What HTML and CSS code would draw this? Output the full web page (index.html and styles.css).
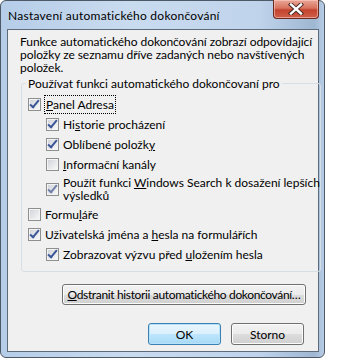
FILE: index.html
```html
<!DOCTYPE html>
<html lang="cs">
<head>
  <meta charset="UTF-8">
  <title>Nastavení automatického dokončování</title>
  <link rel="stylesheet" href="styles.css">
</head>
<body>

  <div class="window">
    <div class="titlebar">
      <span class="title">Nastavení automatického dokončování</span>
      <div class="close-btn">
        <svg width="16" height="12" viewBox="0 0 16 12">
          <path d="M3 1.5 L13 10.5 M13 1.5 L3 10.5" stroke="#3b2220" stroke-width="4.2" stroke-linecap="square"/>
          <path d="M3 1.5 L13 10.5 M13 1.5 L3 10.5" stroke="#ffffff" stroke-width="2.4" stroke-linecap="square"/>
        </svg>
      </div>
    </div>

    <div class="client">
      <p class="intro">
        Funkce automatického dokončování zobrazí odpovídající<br>
        položky ze seznamu dříve zadaných nebo navštívených<br>
        položek.
      </p>

      <fieldset class="group">
        <legend>Používat funkci automatického dokončovaní pro</legend>

        <label class="check">
          <span class="box checked"></span>
          <span class="focus"><u>P</u>anel Adresa</span>
        </label>
        <div class="sub">
          <label class="check">
            <span class="box checked"></span>
            <span>Hi<u>s</u>torie procházení</span>
          </label>
          <label class="check">
            <span class="box checked"></span>
            <span>Oblíbené položk<u>y</u></span>
          </label>
          <label class="check">
            <span class="box"></span>
            <span><u>I</u>nformační kanály</span>
          </label>
          <label class="check tall">
            <span class="box checked dim"></span>
            <span>Použít funkci <u>W</u>indows Search k dosažení lepších<br>výsledků</span>
          </label>
        </div>

        <label class="check">
          <span class="box"></span>
          <span>Formu<u>l</u>áře</span>
        </label>
        <label class="check">
          <span class="box checked"></span>
          <span>Uživatelská jména a <u>h</u>esla na formulářích</span>
        </label>
        <div class="sub">
          <label class="check">
            <span class="box checked"></span>
            <span>Zobrazovat výzvu před <u>u</u>ložením hesla</span>
          </label>
        </div>
      </fieldset>

      <div class="clear-row">
        <button class="btn wide"><u>O</u>dstranit historii automatického dokončování…</button>
      </div>

      <div class="actions">
        <button class="btn default">OK</button>
        <button class="btn">Storno</button>
      </div>
    </div>
  </div>

</body>
</html>
```

FILE: styles.css
```css
body {
  margin: 0;
  background: #fff;
  font-family: Lato, "Liberation Sans", Arial, sans-serif;
  font-size: 12px;
  color: #000;
  white-space: nowrap;
}

.window {
  position: relative;
  width: 325px;
  height: 358px;
  box-sizing: border-box;
  border: 1px solid #4d5966;
  border-radius: 6px;
  padding: 0 5px 5px 6px;
  background: linear-gradient(90deg, #b6cde8 0%, #c9dbef 40%, #bfd3eb 80%, #9fb7d2 97%, #b9cde6 100%);
  display: flex;
  flex-direction: column;
}

.titlebar {
  height: 28px;
  flex: none;
}

.title {
  display: block;
  padding: 7px 0 0 1px;
  line-height: 15px;
  letter-spacing: 0.25px;
  color: #000;
}

.close-btn {
  position: absolute;
  top: -1px;
  right: 5px;
  width: 44px;
  height: 18px;
  border: 1px solid #6a2a20;
  border-top: none;
  border-radius: 0 0 4px 4px;
  background: linear-gradient(#e9a797 0%, #d8735f 45%, #c2432e 55%, #d0604a 100%);
  box-shadow: inset 0 0 0 1px rgba(255,210,200,0.55);
  display: flex;
  justify-content: center;
  align-items: center;
}

.client {
  flex: 1;
  min-height: 0;
  border: 1px solid #5e6b7b;
  background: #f0f0f0;
  padding: 5px 0 0 0;
}

.intro {
  margin: 0 0 0 12px;
  line-height: 13px;
  letter-spacing: -0.05px;
}

.group {
  margin: 2px 11px 0 13px;
  padding: 3px 0 7px 6px;
  border: 1px solid #d5dfe5;
  border-radius: 3px;
}

.group legend {
  margin-left: -2px;
  padding: 0 2px;
  line-height: 15px;
}

.check {
  display: flex;
  align-items: center;
  height: 20px;
}

.check.tall {
  height: 30px;
}

.check.tall span:last-child {
  line-height: 13px;
}

.sub {
  padding-left: 18px;
}

.box {
  position: relative;
  flex: none;
  width: 11px;
  height: 11px;
  margin-right: 4px;
  border: 1px solid #8e8f8f;
  background: linear-gradient(135deg, #cdd1d8 0%, #e9eaec 60%, #fafafa 100%);
  box-shadow: inset 0 0 0 1px #f4f4f4;
}

.box.checked::after {
  content: "";
  position: absolute;
  left: 3px;
  top: -1px;
  width: 3px;
  height: 8px;
  border-right: 2px solid #3a5597;
  border-bottom: 2px solid #3a5597;
  transform: rotate(40deg);
}

.box.dim::after {
  border-color: #6f7fa8;
}

.focus {
  outline: 1px dotted #000;
  outline-offset: 0;
  padding: 0 1px;
  line-height: 17px;
}

.clear-row {
  display: flex;
  justify-content: flex-end;
  margin: 12px 12px 0 0;
}

.actions {
  display: flex;
  justify-content: flex-end;
  gap: 10px;
  margin: 18px 14px 0 0;
}

.btn {
  font-family: inherit;
  font-size: 12px;
  color: #000;
  width: 73px;
  height: 22px;
  padding: 0;
  border: 1px solid #707070;
  border-radius: 3px;
  background: linear-gradient(#f2f2f2 0%, #ebebeb 50%, #dddddd 51%, #cfcfcf 100%);
  box-shadow: inset 0 0 0 1px #fcfcfc;
}

.btn.wide {
  width: 244px;
  height: 21px;
  letter-spacing: -0.35px;
}

.btn.default {
  border-color: #3c7fb1;
  background: linear-gradient(#eaf6fd 0%, #d9f0fc 50%, #bee6fd 51%, #a7d9f5 100%);
  box-shadow: inset 0 0 0 1px #b6e3fb;
}
```
